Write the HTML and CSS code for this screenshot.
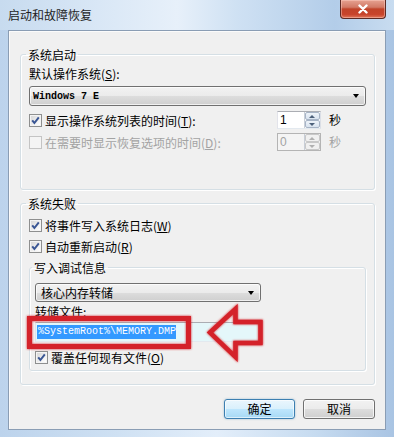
FILE: index.html
```html
<!DOCTYPE html>
<html>
<head>
<meta charset="utf-8">
<link rel="stylesheet" href="styles.css">
</head>
<body>
<div class="window">
  <div class="titlebar">
    <span class="title">启动和故障恢复</span>
    <div class="close">
      <svg width="16" height="10" viewBox="0 0 16 10"><path d="M4.5 1.5 L11.5 8.5 M11.5 1.5 L4.5 8.5" stroke="#fff" stroke-width="2.4" stroke-linecap="round"/></svg>
    </div>
  </div>
  <div class="client">
    <fieldset class="group g1">
      <legend>系统启动</legend>
      <div class="label">默认操作系统(<u>S</u>):</div>
      <div class="combo c-wide"><span class="mono bold">Windows 7 E</span><span class="arrow"></span></div>
      <div class="row spin-row r1">
        <svg class="check" width="13" height="13" viewBox="0 0 13 13"><defs><linearGradient id="cb" x1="0" y1="0" x2="1" y2="1"><stop offset="0" stop-color="#d8d8d8"/><stop offset="1" stop-color="#ffffff"/></linearGradient></defs><rect x="0.5" y="0.5" width="12" height="12" fill="#f4f4f4" stroke="#8e8f8f"/><rect x="2" y="2" width="9" height="9" fill="url(#cb)"/><path d="M3.2 6.4 L5.4 9 L9.8 3.4" fill="none" stroke="#3a5694" stroke-width="2"/></svg>
        <span class="txt">显示操作系统列表的时间(<u>T</u>):</span>
        <div class="spinner"><span class="val">1</span><span class="spins"><span class="sb up"></span><span class="sb dn"></span></span></div>
        <span class="unit">秒</span>
      </div>
      <div class="row spin-row r2 disabled">
        <svg class="check" width="13" height="13" viewBox="0 0 13 13"><rect x="0.5" y="0.5" width="12" height="12" fill="#f4f4f4" stroke="#c4c4c4"/></svg>
        <span class="txt">在需要时显示恢复选项的时间(<u>D</u>):</span>
        <div class="spinner"><span class="val">0</span><span class="spins"><span class="sb up"></span><span class="sb dn"></span></span></div>
        <span class="unit">秒</span>
      </div>
    </fieldset>

    <fieldset class="group g2">
      <legend>系统失败</legend>
      <div class="row cr1">
        <svg class="check" width="13" height="13" viewBox="0 0 13 13"><rect x="0.5" y="0.5" width="12" height="12" fill="#f4f4f4" stroke="#8e8f8f"/><rect x="2" y="2" width="9" height="9" fill="url(#cb)"/><path d="M3.2 6.4 L5.4 9 L9.8 3.4" fill="none" stroke="#3a5694" stroke-width="2"/></svg>
        <span class="txt">将事件写入系统日志(<u>W</u>)</span>
      </div>
      <div class="row cr2">
        <svg class="check" width="13" height="13" viewBox="0 0 13 13"><rect x="0.5" y="0.5" width="12" height="12" fill="#f4f4f4" stroke="#8e8f8f"/><rect x="2" y="2" width="9" height="9" fill="url(#cb)"/><path d="M3.2 6.4 L5.4 9 L9.8 3.4" fill="none" stroke="#3a5694" stroke-width="2"/></svg>
        <span class="txt">自动重新启动(<u>R</u>)</span>
      </div>
      <fieldset class="group g3">
        <legend>写入调试信息</legend>
        <div class="combo c-narrow"><span class="cjk">核心内存转储</span><span class="arrow"></span></div>
        <div class="label lbl-file">转储文件:</div>
        <div class="field"><span class="sel mono">%SystemRoot%\MEMORY.DMP</span></div>
        <div class="row cr3">
          <svg class="check" width="13" height="13" viewBox="0 0 13 13"><rect x="0.5" y="0.5" width="12" height="12" fill="#f4f4f4" stroke="#8e8f8f"/><rect x="2" y="2" width="9" height="9" fill="url(#cb)"/><path d="M3.2 6.4 L5.4 9 L9.8 3.4" fill="none" stroke="#3a5694" stroke-width="2"/></svg>
          <span class="txt">覆盖任何现有文件(<u>O</u>)</span>
        </div>
      </fieldset>
    </fieldset>

    <div class="buttons">
      <div class="btn default">确定</div>
      <div class="btn">取消</div>
    </div>
  </div>

  <svg class="annot" width="394" height="437" viewBox="0 0 394 437">
    <defs>
      <filter id="glow" x="-20%" y="-20%" width="140%" height="140%">
        <feGaussianBlur in="SourceGraphic" stdDeviation="1.2" result="b"/>
        <feMerge><feMergeNode in="b"/><feMergeNode in="SourceGraphic"/></feMerge>
      </filter>
    </defs>
    <rect x="29.5" y="318.5" width="159" height="28" fill="none" stroke="#d42229" stroke-width="5" filter="url(#glow)"/>
    <polygon points="210,332.5 235.5,309 235.5,322 260.5,322 260.5,343 235.5,343 235.5,357" fill="none" stroke="#d42229" stroke-width="4.5" stroke-linejoin="miter" filter="url(#glow)"/>
  </svg>
</div>
</body>
</html>
```

FILE: styles.css
```css
html, body {
  margin: 0;
  padding: 0;
}
body {
  width: 394px;
  height: 437px;
  overflow: hidden;
  font-family: "Noto Sans CJK SC", "Liberation Sans", sans-serif;
  font-size: 12px;
  color: #000;
}
.window {
  position: relative;
  width: 394px;
  height: 437px;
  display: flex;
  flex-direction: column;
  background: linear-gradient(90deg, #bcd3ec 0%, #cfe1f3 30%, #e3eefa 55%, #c6dbf0 80%, #a9c4e3 100%);
}
.titlebar {
  height: 30px;
  flex: 0 0 30px;
  display: flex;
  align-items: flex-start;
  background: linear-gradient(90deg, #c7dbef 0%, #d9e7f6 25%, #e7f0fa 45%, #cfe1f3 60%, #b3cde9 85%, #c8dcf0 100%);
}
.title {
  align-self: center;
  margin-left: 8px;
  line-height: 16px;
  font-size: 12px;
  color: #1e1e1e;
}
.close {
  margin-left: auto;
  margin-right: 8px;
  width: 46px;
  height: 19px;
  box-sizing: border-box;
  border: 1px solid #5c2a24;
  border-top: none;
  border-radius: 0 0 4px 4px;
  background: linear-gradient(#e6a291 0%, #d27a66 40%, #c14329 50%, #c8442b 80%, #e0765a 100%);
  display: flex;
  align-items: center;
  justify-content: center;
  box-shadow: inset 0 0 0 1px rgba(255, 210, 200, 0.45);
}
.client {
  flex: 1;
  margin: 0 8px 7px 8px;
  border: 1px solid #8a9db4;
  background: #f0f0f0;
  padding: 15px 10px 0 11px;
  box-shadow: inset 1px 1px 0 #fbfbfb;
}
.group {
  margin: 0;
  min-width: 0;
  border: 1px solid #d5dfe5;
  border-radius: 3px;
  box-shadow: inset 1px 1px 0 #fff, 1px 1px 0 #fff;
}
legend {
  padding: 0 2px;
  margin-left: -3px;
  line-height: 17px;
  height: 17px;
  font-size: 12px;
}
.g1 {
  padding: 3px 8px 38px 8px;
}
.g2 {
  margin-top: 5px;
  padding: 5px 8px 13px 8px;
}
.g3 {
  margin-top: 5px;
  padding: 7px 5px 5px 5px;
}
.label {
  line-height: 16px;
  height: 16px;
}
u {
  text-decoration: underline;
}
.mono {
  font-family: "Liberation Mono", "DejaVu Sans Mono", monospace;
  font-size: 10px;
}
.bold {
  font-weight: bold;
}
.combo {
  box-sizing: border-box;
  border: 1px solid #707070;
  border-radius: 3px;
  background: linear-gradient(#f2f2f2 0%, #ebebeb 50%, #dddddd 51%, #cfcfcf 100%);
  display: flex;
  align-items: center;
  padding-left: 3px;
  box-shadow: inset 0 0 0 1px rgba(255,255,255,0.7);
}
.c-wide {
  margin-top: 4px;
  height: 20px;
}
.c-narrow {
  height: 19px;
  width: 226px;
  padding-left: 5px;
}
.combo .arrow {
  margin-left: auto;
  margin-right: 6px;
  width: 0;
  height: 0;
  border-left: 3.5px solid transparent;
  border-right: 3.5px solid transparent;
  border-top: 4px solid #000;
}
.row {
  display: flex;
  align-items: center;
  height: 16px;
}
.check {
  flex: 0 0 13px;
  margin-right: 3px;
}
.spin-row {
  height: 18px;
}
.r1 { margin-top: 5px; }
.r2 { margin-top: 4px; }
.cr2 { margin-top: 5px; }
.cr3 { margin-top: 7px; }
.spinner {
  margin-left: auto;
  width: 44px;
  height: 18px;
  box-sizing: border-box;
  border: 1px solid #abadb3;
  border-color: #abadb3 #dbdfe6 #e3e9ef #e2e3ea;
  background: #fff;
  display: flex;
}
.spinner .val {
  flex: 1;
  padding-left: 2px;
  font-family: "Liberation Sans", sans-serif;
  font-size: 12px;
  line-height: 16px;
}
.spins {
  width: 15px;
  display: flex;
  flex-direction: column;
  border-left: 1px solid #c9cfd8;
}
.sb {
  flex: 1;
  display: flex;
  align-items: center;
  justify-content: center;
  background: linear-gradient(#eef3f9, #d9e3ef);
  border: 1px solid #a7b4c6;
  border-radius: 2px;
  box-sizing: border-box;
}
.sb.up::after {
  content: "";
  border-left: 3px solid transparent;
  border-right: 3px solid transparent;
  border-bottom: 3px solid #4c607a;
}
.sb.dn::after {
  content: "";
  border-left: 3px solid transparent;
  border-right: 3px solid transparent;
  border-top: 3px solid #4c607a;
}
.unit {
  margin-left: 8px;
  margin-right: 25px;
  line-height: 16px;
}
.disabled {
  color: #a3a3a3;
}
.disabled .spinner {
  border-color: #b4b4b4;
  background: #f4f4f4;
}
.disabled .sb {
  background: #f0f0f0;
  border-color: #c8c8c8;
}
.disabled .sb.up::after { border-bottom-color: #b0b0b0; }
.disabled .sb.dn::after { border-top-color: #b0b0b0; }
.cjk {
  line-height: 16px;
}
.lbl-file {
  margin-top: 2px;
}
.field {
  margin-top: 2px;
  width: 226px;
  height: 20px;
  box-sizing: border-box;
  border: 1px solid #abadb3;
  border-color: #abadb3 #dbdfe6 #e3e9ef #e2e3ea;
  background: #e4f7fa;
  display: flex;
  align-items: center;
  padding-left: 1px;
}
.sel {
  background: #3399ff;
  color: #fff;
  line-height: 14px;
  padding: 0 0 0 1px;
}
.buttons {
  margin-top: 14px;
  display: flex;
  justify-content: flex-end;
  gap: 8px;
}
.btn {
  width: 72px;
  height: 20px;
  box-sizing: border-box;
  border: 1px solid #707070;
  border-radius: 3px;
  background: linear-gradient(#f2f2f2 0%, #ebebeb 50%, #dddddd 51%, #cfcfcf 100%);
  box-shadow: inset 0 0 0 1px rgba(255,255,255,0.75);
  display: flex;
  align-items: center;
  justify-content: center;
  line-height: 16px;
}
.btn.default {
  width: 71px;
  border-color: #3c7fb1;
  background: linear-gradient(#eaf6fd 0%, #d9f0fc 50%, #bee6fd 51%, #a7d9f5 100%);
  box-shadow: inset 0 0 0 1px rgba(255,255,255,0.6), 0 0 2px rgba(60,127,177,0.5);
}
.annot {
  position: absolute;
  left: 0;
  top: 0;
  pointer-events: none;
}
```
